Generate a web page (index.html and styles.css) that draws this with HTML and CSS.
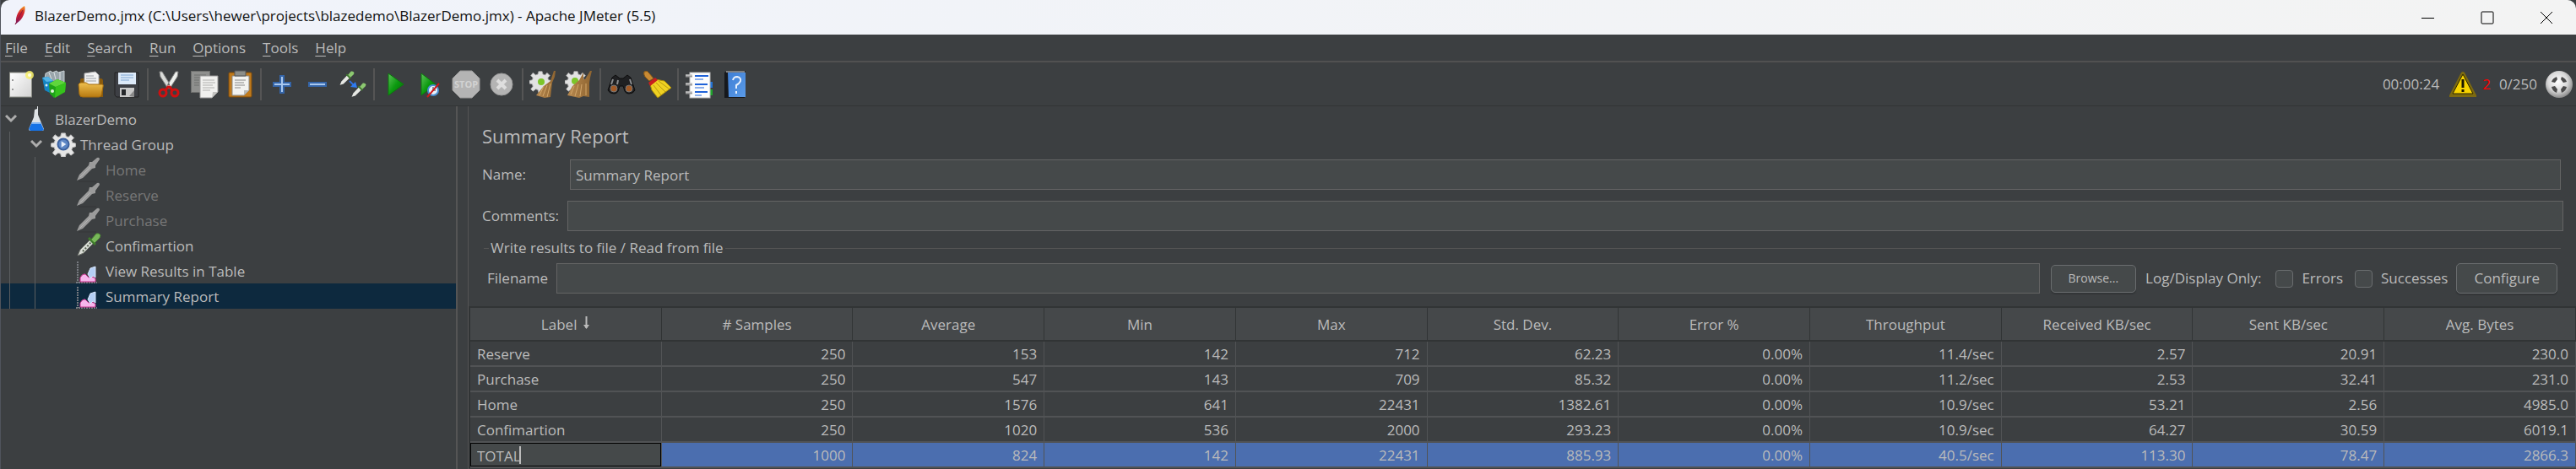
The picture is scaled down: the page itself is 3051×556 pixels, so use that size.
FILE: index.html
```
<!DOCTYPE html>
<html lang="en">
<head>
<meta charset="utf-8">
<title>BlazerDemo.jmx - Apache JMeter (5.5)</title>
<link rel="stylesheet" href="styles.css">
</head>
<body>
<svg class="defs" aria-hidden="true">
  <defs>
    <linearGradient id="gPaper" x1="0" y1="0" x2="1" y2="1"><stop offset="0" stop-color="#fff"/><stop offset="1" stop-color="#d2d2d2"/></linearGradient>
    <linearGradient id="gFolder" x1="0" y1="0" x2="0" y2="1"><stop offset="0" stop-color="#efc04f"/><stop offset="1" stop-color="#b87a10"/></linearGradient>
    <linearGradient id="gPlay" x1="0" y1="0" x2="1" y2="1"><stop offset="0" stop-color="#5fc35a"/><stop offset=".5" stop-color="#0c9a10"/><stop offset="1" stop-color="#046a06"/></linearGradient>
    <linearGradient id="gBroom" x1="0" y1="0" x2="1" y2="0"><stop offset="0" stop-color="#b98a50"/><stop offset="1" stop-color="#8e6430"/></linearGradient>
    <linearGradient id="gFeather" x1="0" y1="1" x2="0" y2="0"><stop offset="0" stop-color="#6b2380"/><stop offset=".3" stop-color="#b01c46"/><stop offset=".6" stop-color="#d22128"/><stop offset="1" stop-color="#f59a23"/></linearGradient>
    <linearGradient id="gBook" x1="0" y1="0" x2="1" y2="1"><stop offset="0" stop-color="#3f7fd6"/><stop offset="1" stop-color="#5a9be8"/></linearGradient>
    <radialGradient id="gBall" cx=".45" cy=".4" r=".6"><stop offset="0" stop-color="#fff"/><stop offset=".6" stop-color="#d8d8d8"/><stop offset="1" stop-color="#8c8c8c"/></radialGradient>
    <g id="dropper">
      <path d="M2 27L5 20L17 8L21 12L9 24Z" fill="#d9dcd6" stroke="#6f736c" stroke-width="1"/>
      <path d="M8 22L18 11" stroke="#55604f" stroke-width="2" stroke-dasharray="2 2"/>
      <path d="M15 6L23 14" stroke="#3f7a2c" stroke-width="3"/>
      <path d="M18 8L24 1Q28 0 29 3L28 6L22 12Z" fill="#79b85a" stroke="#4c8a33"/>
    </g>
    <g id="dropperMini">
      <path d="M1 28L4 21L15 9L20 14L8 26Z" fill="#e6e8e4"/>
      <path d="M14 7L22 15" stroke="#3f7a2c" stroke-width="3"/>
      <path d="M17 8L23 1Q28 0 29 4L28 7L22 13Z" fill="#8cc870"/>
    </g>
    <g id="dropperOff">
      <path d="M1 28L4 21L15 10L16 6L19 6L25 1Q28 0 28 3L23 10L23 13L19 14L8 25Z" fill="#9b9b9b"/>
      <path d="M5 24L17 12" stroke="#b4b4b4" stroke-width="1"/>
      <path d="M3 29H24" stroke="#343638"/>
    </g>
    <g id="chart">
      <path d="M2 0V25M0 25H25" stroke="#777a80" stroke-width="2" stroke-dasharray="2 1"/>
      <path d="M5 24V19Q8 14 11 15L15 19L19 18L23 20V24H5Z" fill="#f6b5ec" stroke="#c8328c"/>
      <path d="M14 15L17 8Q20 7 23 6V19L20 17L17 20Z" fill="#b5cff5" stroke="#d8e6fb"/>
    </g>
    <g id="gear">
      <path d="M13 2h5l1 4 3 1 3-3 4 4-3 3 1 3 4 1v4l-4 1-1 3 3 4-4 3-3-3-3 1-1 4h-5l-1-4-3-1-4 3-3-3 3-4-1-3-4-1v-4l4-1 1-3-3-3 3-4 4 3 3-1Z"/>
    </g>
  </defs>
</svg>

<div class="window">
  <header class="titlebar">
    <svg class="feather" viewBox="0 0 14 24" width="14" height="24"><path d="M2 21C1 13 6 4 12 1C14 5 11 15 6 19L1 23" fill="url(#gFeather)"/><path d="M1 23L10 6" stroke="#8a1a3c" stroke-width="1"/></svg>
    <h1 class="title">BlazerDemo.jmx (C:\Users\hewer\projects\blazedemo\BlazerDemo.jmx) - Apache JMeter (5.5)</h1>
    <div class="controls">
      <button class="control" aria-label="Minimize"><svg width="16" height="16" viewBox="0 0 16 16"><path d="M0 8.500H15"/></svg></button>
      <button class="control" aria-label="Maximize"><svg width="16" height="16" viewBox="0 0 16 16"><rect x="1" y="1" width="14" height="14" rx="1"/></svg></button>
      <button class="control" aria-label="Close"><svg width="16" height="16" viewBox="0 0 16 16"><path d="M1 1L15 15M15 1L1 15"/></svg></button>
    </div>
  </header>

  <nav class="menubar">
    <button class="menu"><u>F</u>ile</button>
    <button class="menu"><u>E</u>dit</button>
    <button class="menu"><u>S</u>earch</button>
    <button class="menu"><u>R</u>un</button>
    <button class="menu"><u>O</u>ptions</button>
    <button class="menu"><u>T</u>ools</button>
    <button class="menu"><u>H</u>elp</button>
  </nav>

  <div class="toolbar">
    <div class="tools">
      <button class="tool" aria-label="New"><svg viewBox="0 0 34 34"><rect x="4.500" y="3" width="26" height="29" fill="url(#gPaper)" stroke="#8d8f88"/><path d="M7 12h2M7 23h2" stroke="#999" stroke-width="2"/><circle cx="28" cy="6" r="5" fill="#f7ee6a" opacity=".85"/><circle cx="28" cy="6" r="2" fill="#fffde0"/></svg></button>
      <button class="tool" aria-label="Templates"><svg viewBox="0 0 34 34"><path d="M5 4L11 1L13 3L18 1L20 3L27 1V14L12 18L4 10Z" fill="#9aa5ab" stroke="#c6ced2"/><path d="M9 3l3 8M15 3l2 8M22 2v10" stroke="#dde3e6"/><path d="M1 9L8 8L14 13V29L4 24Z" fill="#1585c4"/><path d="M1 9L8 8L14 13L6 14Z" fill="#56b4e6"/><path d="M9 16L19 11L29 15L28 26L15 33L10 28Z" fill="#1fa318"/><path d="M9 16L19 11L29 15L17 20Z" fill="#5fd63c"/><path d="M17 20L29 15L28 26L16 33Z" fill="#36c21c"/><circle cx="13" cy="25" r="2" fill="#dff5d8"/><circle cx="6" cy="18" r="1.500" fill="#d6edf8"/></svg></button>
      <button class="tool" aria-label="Open"><svg viewBox="0 0 34 34"><path d="M4 12Q4 10 6 10H28Q31 10 31 13V32H4Z" fill="#8a5a0c"/><path d="M9 4L22 2L26 6V22H9Z" fill="#f2f2f2" stroke="#aaa"/><path d="M11 7h9M11 10h12M11 13h12" stroke="#9aa0a8"/><path d="M2 17Q3 15 5 15H11L14 17H30Q32 17 31 20L29 30Q28 32 26 32H7Q4 32 3 29Z" fill="url(#gFolder)" stroke="#a46c0e"/></svg></button>
      <button class="tool" aria-label="Save"><svg viewBox="0 0 34 34"><path d="M3 3H31V32H5L3 30Z" fill="#3d3f44" stroke="#222"/><rect x="7" y="3" width="21" height="14" fill="#dce9f8"/><path d="M10 6h15M10 9h15M10 12h10" stroke="#7fa5d0"/><rect x="9" y="21" width="17" height="11" fill="#c9c9c9"/><rect x="11" y="23" width="5" height="7" fill="#26282b"/><path d="M20 31L26 24V32Z" fill="#888"/></svg></button>
      <span class="sep"></span>
      <button class="tool" aria-label="Cut"><svg viewBox="0 0 34 34"><path d="M6 2L9 2L20 20L16 22L7 8Z" fill="#d9dbd8" stroke="#888"/><path d="M28 2L25 2L14 20L18 22L27 8Z" fill="#eef0ed" stroke="#888"/><circle cx="17" cy="17" r="1" fill="#444"/><ellipse cx="10" cy="27" rx="4" ry="4" fill="none" stroke="#cf1010" stroke-width="3"/><ellipse cx="24" cy="27" rx="4" ry="4" fill="none" stroke="#cf1010" stroke-width="3"/><path d="M13 24L16 20H18L21 24" fill="none" stroke="#cf1010" stroke-width="3"/></svg></button>
      <button class="tool" aria-label="Copy"><svg viewBox="0 0 34 34"><rect x="1.500" y="1.500" width="22" height="25" fill="#8f908e" stroke="#6e6f6d"/><path d="M5 6h14M5 9h14M5 12h6M5 15h6M5 18h6" stroke="#6d6e6c"/><path d="M12 7H33V26L26 33H12Z" fill="#f0f0ee" stroke="#999"/><path d="M15 12h14M15 15h15M15 18h12M15 21h14M15 24h9" stroke="#b0b0ae"/><path d="M33 26H27L26 33Z" fill="#c2c2c0"/></svg></button>
      <button class="tool" aria-label="Paste"><svg viewBox="0 0 34 34"><rect x="4" y="3" width="27" height="29" rx="1" fill="#c07a1c" stroke="#7e4c0c"/><path d="M8 7H28V24L22 30H8Z" fill="#f2f2f0" stroke="#8b8b88"/><path d="M11 1H24V7H11Z" fill="#8c8e8a" stroke="#55575a"/><path d="M11 12h13M11 15h11M11 18h12M11 21h7" stroke="#888"/><path d="M28 24H22V30Z" fill="#b9b9b6"/></svg></button>
      <span class="sep"></span>
      <button class="tool" aria-label="Expand all"><svg viewBox="0 0 34 34"><path d="M15 7h4v8h8v4h-8v8h-4v-8H7v-4h8Z" fill="#a9c8ee" stroke="#3565a8" stroke-width="2"/></svg></button>
      <button class="tool" aria-label="Collapse all"><svg viewBox="0 0 34 34"><path d="M7 15h20v4H7Z" fill="#a9c8ee" stroke="#3565a8" stroke-width="2"/></svg></button>
      <button class="tool" aria-label="Toggle"><svg viewBox="0 0 34 34"><use href="#dropperMini" transform="translate(1 1) scale(.6)"/><use href="#dropperMini" transform="translate(15 15) scale(.6)"/><path d="M13 13L18 18" stroke="#2f6fe0" stroke-width="2"/><path d="M22 21L14 20L20 14Z" fill="#2f7bf0"/></svg></button>
      <span class="sep"></span>
      <button class="tool" aria-label="Start"><svg viewBox="0 0 34 34"><path d="M9 4L27 17L9 30Z" fill="url(#gPlay)" stroke="#0a7a0c"/></svg></button>
      <button class="tool" aria-label="Start no pauses"><svg viewBox="0 0 34 34"><path d="M6 4L23 17L6 30Z" fill="url(#gPlay)" stroke="#0a7a0c"/><circle cx="20" cy="24" r="6" fill="#e9f2fb" stroke="#4b8fd0" stroke-width="2"/><path d="M20 20V24H23" fill="none" stroke="#333"/><path d="M13 32L27 16" stroke="#d01818" stroke-width="2"/></svg></button>
      <button class="tool" aria-label="Stop" disabled><svg viewBox="0 0 34 34"><path d="M10 1H24L33 10V24L24 33H10L1 24V10Z" fill="#b4b4b4" stroke="#9a9a9a"/><text x="17" y="21" class="stoptext">STOP</text></svg></button>
      <button class="tool" aria-label="Shutdown" disabled><svg viewBox="0 0 34 34"><circle cx="17" cy="17" r="13" fill="#b4b4b4" stroke="#9a9a9a"/><path d="M12 12L22 22M22 12L12 22" stroke="#dedede" stroke-width="4"/></svg></button>
      <span class="sep"></span>
      <button class="tool" aria-label="Clear"><svg viewBox="0 0 34 34"><use href="#gear" transform="scale(.84)" fill="#e2e2e2" stroke="#aaa"/><circle cx="14" cy="14" r="4" fill="#7cc52a"/><path d="M29 1L31 1L30 8L27 15L25 32L18 33L8 30L17 19L25 13Z" fill="url(#gBroom)"/><path d="M17 19L12 30M21 18L16 31M25 16L21 32" stroke="#d3a76b"/></svg></button>
      <button class="tool" aria-label="Clear all"><svg viewBox="0 0 34 34"><use href="#gear" transform="scale(.84)" fill="#e2e2e2" stroke="#aaa"/><circle cx="12" cy="13" r="4" fill="#7cc52a"/><path d="M22 3L22 11L24 11L30 1L32 1L30 9L29 15L29 32L22 31L17 33L3 30L9 19L17 12Z" fill="url(#gBroom)"/><path d="M11 19L7 29M16 17L12 31M20 17L18 31M25 16L25 30" stroke="#d3a76b"/></svg></button>
      <span class="sep"></span>
      <button class="tool" aria-label="Search"><svg viewBox="0 0 34 34"><path d="M1 24L6 9L10 6L15 10H19L24 6L28 9L33 24Q31 28 26 28Q21 28 20 22L19 19H15L14 22Q13 28 8 28Q3 28 1 24Z" fill="#1f2022" stroke="#0d0d0d"/><path d="M7 11L5 17M27 11L29 17M13 12L12 17" stroke="#8c8e90" stroke-width="2"/><circle cx="8" cy="22" r="4" fill="#a35a26" stroke="#777"/><circle cx="26" cy="22" r="4" fill="#a35a26" stroke="#777"/></svg></button>
      <button class="tool" aria-label="Reset search"><svg viewBox="0 0 34 34"><path d="M2 2Q6 0 8 4L13 10L8 13L3 8Q1 5 2 2Z" fill="#c88a34" stroke="#8c5a14"/><path d="M15 11L26 13L34 21L18 33L11 24L9 17Z" fill="#efd122" stroke="#a88a08"/><path d="M16 15L27 26M19 13L31 22M13 18L22 30" stroke="#b79a10"/><path d="M7 15L15 9L18 12L9 19Z" fill="#c81e1e"/></svg></button>
      <span class="sep"></span>
      <button class="tool" aria-label="Function helper"><svg viewBox="0 0 34 34"><path d="M28 14h5v7h-5Z" fill="#2475d8"/><path d="M28 23h5v7h-5Z" fill="#1fa52c"/><rect x="6" y="3" width="24" height="30" fill="#fcfcfc" stroke="#bbb"/><path d="M12 7h16M12 17h15M12 26h15" stroke="#1f62d8" stroke-width="2"/><path d="M12 11h10M12 21h11M12 30h8" stroke="#1f62d8" stroke-width="1"/><path d="M1 7h8M1 17h8M1 27h8" stroke="#999" stroke-width="3"/><path d="M1 6h8M1 16h8M1 26h8" stroke="#ddd"/></svg></button>
      <button class="tool" aria-label="Help"><svg viewBox="0 0 34 34"><path d="M5 3L8 1H30L29 4V33H5Z" fill="#16181c"/><path d="M9 3H30V32H10Z" fill="url(#gBook)"/><path d="M7 2H29" stroke="#e8e8e8"/><path d="M15 12Q16 8 20 8Q25 9 24 13Q23 16 19 18V22M19 25V28" fill="none" stroke="#e8f1fd" stroke-width="2"/></svg></button>
    </div>
    <div class="status">
      <span class="clock">00:00:24</span>
      <button class="warn" aria-label="Errors logged"><svg width="34" height="34" viewBox="0 0 34 34"><path d="M1 30L15 3Q17 1 19 3L33 30V32H1Z" fill="#7d6a10"/><path d="M5 28L17 5L29 28Z" fill="#f8d400" stroke="#2b2500" stroke-width="1"/><path d="M17 11V21M17 23V26" stroke="#1a1600" stroke-width="3"/></svg></button>
      <span class="errors">2</span>
      <span class="threads">0/250</span>
      <svg class="ball" width="34" height="34" viewBox="0 0 34 34"><circle cx="17" cy="17" r="16" fill="url(#gBall)"/><path d="M8 14Q9 10 14 8L15 11L12 15ZM26 14Q25 10 20 8L19 11L22 15ZM8 20Q9 25 14 27L15 23L12 19ZM26 20Q25 25 20 27L19 23L22 19Z" fill="#4a4a4a"/></svg>
    </div>
  </div>

  <div class="main">
    <aside class="tree">
      <div class="node"><svg class="chev" width="24" height="14" viewBox="0 0 24 14"><path d="M1 3L7 9L13 3"/></svg><svg class="nicon" viewBox="0 0 30 30"><path d="M11 4L14 3V0H15V10L22 27Q22 29 20 29H6Q4 29 4 27L10 13Z" fill="#dfe3e6"/><path d="M8 19H18L22 28L20 29H6L4 27Z" fill="#1673e6"/><path d="M8 19H18L19 21H7Z" fill="#7fb4f2"/></svg><span>BlazerDemo</span></div>
      <div class="node"><i class="guide"></i><svg class="chev" width="24" height="14" viewBox="0 0 24 14"><path d="M1 3L7 9L13 3"/></svg><svg class="nicon" viewBox="0 0 31 32"><use href="#gear" fill="#e6e6e6" stroke="#bdbdbd"/><circle cx="15.500" cy="16" r="7" fill="#5d86c4" stroke="#3a5f9c" stroke-width="2"/><path d="M13 12L19 16L13 20Z" fill="#e8effa"/></svg><span>Thread Group</span></div>
      <div class="node off"><i class="guide"></i><i class="guide"></i><svg class="nicon leaf" viewBox="0 0 30 30"><use href="#dropperOff"/></svg><span>Home</span></div>
      <div class="node off"><i class="guide"></i><i class="guide"></i><svg class="nicon leaf" viewBox="0 0 30 30"><use href="#dropperOff"/></svg><span>Reserve</span></div>
      <div class="node off"><i class="guide"></i><i class="guide"></i><svg class="nicon leaf" viewBox="0 0 30 30"><use href="#dropperOff"/></svg><span>Purchase</span></div>
      <div class="node"><i class="guide"></i><i class="guide"></i><svg class="nicon leaf" viewBox="0 0 30 30"><use href="#dropper"/></svg><span>Confimartion</span></div>
      <div class="node"><i class="guide"></i><i class="guide"></i><svg class="nicon leaf" viewBox="0 0 30 30"><use href="#chart" transform="translate(0 4)"/></svg><span>View Results in Table</span></div>
      <div class="node selected"><i class="guide"></i><i class="guide"></i><svg class="nicon leaf" viewBox="0 0 30 30"><use href="#chart" transform="translate(0 4)"/></svg><span>Summary Report</span></div>
    </aside>
    <div class="divider"></div>

    <main class="panel">
      <div class="form">
        <h2 class="heading">Summary Report</h2>
        <div class="field name"><label for="name">Name:</label><input id="name" class="text" type="text" value="Summary Report"></div>
        <div class="field comments"><label for="comments">Comments:</label><input id="comments" class="text" type="text"></div>
        <fieldset class="group">
          <legend>Write results to file / Read from file</legend>
          <div class="filerow">
            <label for="filename">Filename</label>
            <input id="filename" class="text" type="text">
            <button class="btn small">Browse...</button>
            <span class="only">Log/Display Only:</span>
            <label class="check"><input type="checkbox">Errors</label>
            <label class="check"><input type="checkbox">Successes</label>
            <button class="btn">Configure</button>
          </div>
        </fieldset>
      </div>

      <table class="report">
        <thead>
          <tr><th>Label <svg width="9" height="16" viewBox="0 0 9 16"><path d="M4.500 0V14" stroke="#bbb" stroke-width="2"/><path d="M1 10L4.500 15L8 10Z" fill="#bbb"/></svg></th><th># Samples</th><th>Average</th><th>Min</th><th>Max</th><th>Std. Dev.</th><th>Error %</th><th>Throughput</th><th>Received KB/sec</th><th>Sent KB/sec</th><th>Avg. Bytes</th></tr>
        </thead>
        <tbody>
          <tr><td>Reserve</td><td>250</td><td>153</td><td>142</td><td>712</td><td>62.23</td><td>0.00%</td><td>11.4/sec</td><td>2.57</td><td>20.91</td><td>230.0</td></tr>
          <tr><td>Purchase</td><td>250</td><td>547</td><td>143</td><td>709</td><td>85.32</td><td>0.00%</td><td>11.2/sec</td><td>2.53</td><td>32.41</td><td>231.0</td></tr>
          <tr><td>Home</td><td>250</td><td>1576</td><td>641</td><td>22431</td><td>1382.61</td><td>0.00%</td><td>10.9/sec</td><td>53.21</td><td>2.56</td><td>4985.0</td></tr>
          <tr><td>Confimartion</td><td>250</td><td>1020</td><td>536</td><td>2000</td><td>293.23</td><td>0.00%</td><td>10.9/sec</td><td>64.27</td><td>30.59</td><td>6019.1</td></tr>
          <tr class="total"><td class="editing"><input class="celledit" type="text" value="TOTAL" aria-label="Label"><i class="caret"></i></td><td>1000</td><td>824</td><td>142</td><td>22431</td><td>885.93</td><td>0.00%</td><td>40.5/sec</td><td>113.30</td><td>78.47</td><td>2866.3</td></tr>
        </tbody>
      </table>
    </main>
  </div>
</div>
</body>
</html>
```
FILE: styles.css
```
* { box-sizing: border-box; }

body {
  margin: 0;
  background: #3c3f41;
  color: #bbbbbb;
  font: 17px/24px "Open Sans", "Noto Sans", sans-serif;
}

button, input {
  margin: 0;
  font: inherit;
  color: inherit;
}

.defs { position: absolute; width: 0; height: 0; }

.window {
  display: flex;
  flex-direction: column;
  min-height: 100vh;
  border-left: 1px solid #50545c;
  background: #3c3f41;
}

/* Title bar */
.titlebar {
  display: flex;
  align-items: center;
  height: 41px;
  padding-left: 16px;
  border-radius: 10px 10px 0 0;
  background: linear-gradient(90deg, #f0f3fb, #f3f3f3);
  color: #111;
}
.feather { margin-bottom: 6px; }
.title {
  flex: 1;
  margin: 0 0 4px 10px;
  font-size: 17px;
  font-weight: 400;
}
.controls { display: flex; }
.control {
  width: 70px;
  height: 36px;
  padding: 0;
  border: 0;
  background: none;
}
.control svg { display: block; margin: 0 auto; fill: none; stroke: #000; stroke-width: 1; }

/* Menu bar */
.menubar {
  display: flex;
  align-items: center;
  height: 33px;
  padding: 1px 0 0 5px;
  gap: 20px;
  border-bottom: 2px solid #515151;
}
.menu { padding: 0; border: 0; background: none; line-height: 24px; }
.menu u { text-underline-offset: 3px; text-decoration-thickness: 1px; }

/* Tool bar */
.toolbar {
  display: flex;
  align-items: center;
  justify-content: space-between;
  height: 52px;
  padding: 0 3px 0 2px;
  border-bottom: 1px solid #323435;
}
.tools, .status { display: flex; align-items: center; }
.tool {
  width: 42px;
  height: 42px;
  padding: 4px;
  border: 0;
  background: none;
}
.tool svg { display: block; width: 34px; height: 34px; }
.stoptext {
  font: 700 11px "Open Sans", sans-serif;
  text-anchor: middle;
  fill: #d2d2d2;
}
.sep { width: 2px; height: 38px; margin: 0 3px; background: #555555; }
.clock { margin-right: 11px; }
.warn { padding: 0; border: 0; background: none; }
.warn svg, .ball { display: block; }
.errors { margin: 0 10px 0 6px; color: #ff0000; }
.ball { margin-left: 9px; }

/* Body */
.main { display: flex; flex: 1; }
.tree { flex: 0 0 539px; }
.node { display: flex; align-items: center; height: 30px; }
.node span { padding-top: 2px; }
.node.selected { background: #0d293e; }
.node.off { color: #777777; }
.guide {
  align-self: stretch;
  width: 20px;
  margin-left: 10px;
  border-left: 1px solid #5a5d5f;
}
.chev {
  flex: none;
  margin-left: 5px;
  fill: none;
  stroke: #adadad;
  stroke-width: 3;
}
.nicon { flex: none; width: 30px; height: 30px; margin-right: 5px; }
.leaf { margin-left: 29px; }
.divider {
  flex: 0 0 15px;
  border-left: 2px solid #555555;
  border-right: 1px solid #555555;
}

.panel { flex: 1; min-width: 0; }
.form { padding: 20px 15px 15px 16px; }
.heading {
  margin: 0 0 13px;
  font-size: 22px;
  line-height: 30px;
  font-weight: 400;
}
.field { display: flex; align-items: center; }
.name { margin-right: 3px; margin-bottom: 13px; }
.name label { width: 104px; }
.comments label { width: 101px; }
.text {
  flex: 1;
  min-width: 0;
  height: 36px;
  padding: 0 6px;
  border: 1px solid #646464;
  background: #45494a;
}
.group {
  margin: 8px 3px 0 2px;
  padding: 6px 4px 0;
  border: 0 solid #555555;
  border-top-width: 1px;
}
.group legend { margin-left: 2px; padding: 0 2px; }
.filerow { display: flex; align-items: center; }
.filerow .text { margin: 0 13px 0 10px; }
.btn {
  height: 36px;
  padding: 0 20px;
  border: 1px solid #6a6d6f;
  border-radius: 5px;
  background: #45494a;
  box-shadow: 0 2px 1px #333638;
}
.btn.small { height: 33px; font-size: 14px; }
.only { margin: 0 17px 0 11px; }
.check { display: flex; align-items: center; gap: 10px; margin-right: 14px; }
.check + .check { margin-right: 10px; }
.check input {
  width: 21px;
  height: 21px;
  appearance: none;
  border: 1px solid #6a6d6f;
  border-radius: 4px;
  background: #45494a;
}

/* Results table */
.report {
  width: 100%;
  table-layout: fixed;
  border-collapse: separate;
  border-spacing: 0;
  border-top: 2px solid #313435;
  border-left: 2px solid #313435;
}
.report th {
  height: 40px;
  padding: 2px 0 0;
  border-right: 1px solid #313435;
  border-bottom: 2px solid #313435;
  background: #45484a;
  font-weight: 400;
}
.report th svg { margin-left: 2px; }
.report td {
  height: 30px;
  padding: 1px 8px 0;
  border-right: 1px solid #515355;
  border-bottom: 2px solid #515355;
  text-align: right;
}
.report td:first-child { text-align: left; }
.total td { background: #4b6eaf; }
.report td.editing { position: relative; padding: 0; background: #45494a; }
.celledit {
  display: block;
  width: 100%;
  height: 28px;
  padding: 3px 7px 0;
  border: 1px solid #000;
  background: #45494a;
}
.caret {
  position: absolute;
  left: 58px;
  top: 4px;
  width: 2px;
  height: 21px;
  background: #bbbbbb;
}
```
